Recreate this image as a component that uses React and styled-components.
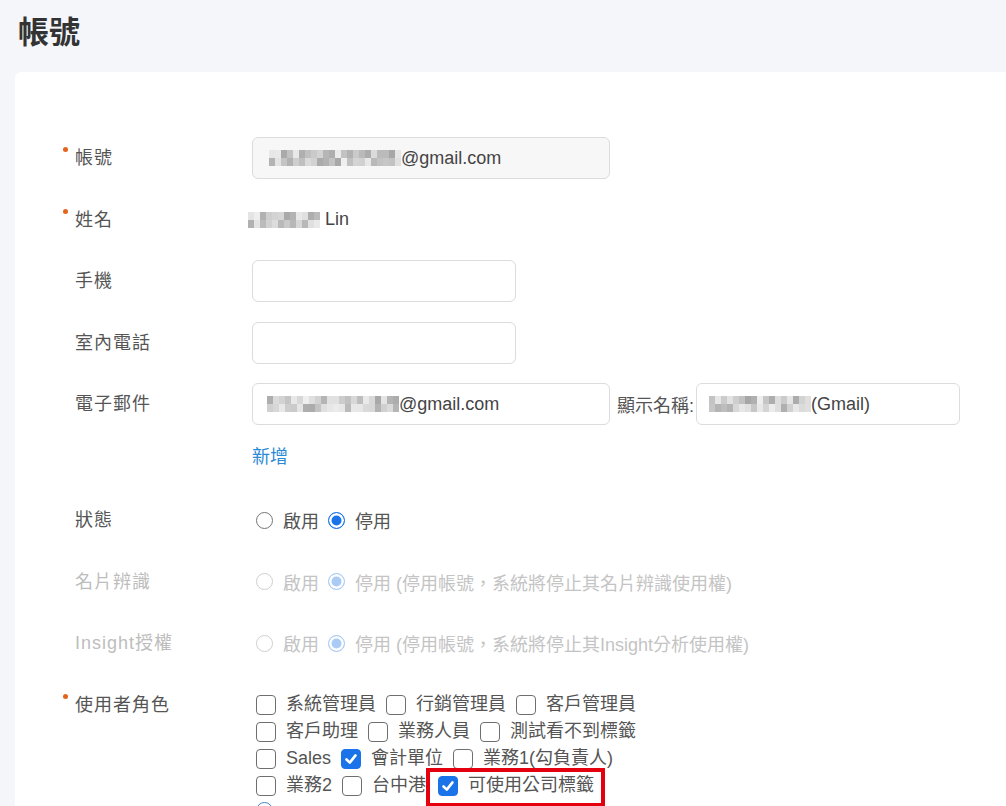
import React from "react";
import styled, { createGlobalStyle } from "styled-components";

const GlobalStyle = createGlobalStyle`
  html, body {
    margin: 0;
    padding: 0;
    background: #f5f6fa;
  }
  body {
    font-family: "Liberation Sans", "Noto Sans CJK TC", sans-serif;
    color: #444;
    overflow: hidden;
  }
`;

const roles = [
  { name: "系統管理員" },
  { name: "行銷管理員" },
  { name: "客戶管理員" },
  { name: "客戶助理" },
  { name: "業務人員" },
  { name: "測試看不到標籤" },
  { name: "Sales" },
  { name: "會計單位", checked: true },
  { name: "業務1(勾負責人)" },
  { name: "業務2" },
  { name: "台中港" },
  { name: "可使用公司標籤", checked: true, highlight: true },
];

// pixelated blur over hidden personal data
const Mosaic = ({ width, seed, offset = 0 }) => {
  const cols = Math.round(width / 6);
  const cells = [];
  let s = seed;
  for (let i = 0; i < cols * 2; i++) {
    s = (s * 9301 + 49297) % 233280;
    const g = 165 + Math.floor((s / 233280) * 75);
    cells.push(`rgb(${g},${g},${g})`);
  }
  return (
    <MosaicBox $cols={cols} $offset={offset}>
      {cells.map((c, i) => (
        <MosaicCell key={i} style={{ background: c }} />
      ))}
    </MosaicBox>
  );
};

const Check = () => (
  <svg width="14" height="14" viewBox="0 0 14 14">
    <polyline
      points="2.5,7.5 5.8,10.6 11.5,3.4"
      fill="none"
      stroke="#fff"
      strokeWidth="2.6"
      strokeLinecap="round"
      strokeLinejoin="round"
    />
  </svg>
);

const App = () => {
  return (
    <>
      <GlobalStyle />
      <Page>
        <Title>帳號</Title>
        <Card>
          <FormRow>
            <Label $required>帳號</Label>
            <Input $width={358} $disabled>
              <Mosaic width={130} seed={17} offset={1} />
              @gmail.com
            </Input>
          </FormRow>

          <FormRow $gap={19.5}>
            <Label $required>姓名</Label>
            <PlainValue>
              <Mosaic width={70} seed={41} offset={-4} />
              &nbsp;Lin
            </PlainValue>
          </FormRow>

          <FormRow $gap={19.5}>
            <Label>手機</Label>
            <Input $width={264} />
          </FormRow>

          <FormRow $gap={19.5}>
            <Label>室內電話</Label>
            <Input $width={264} />
          </FormRow>

          <FormRow $gap={19.5}>
            <Label>電子郵件</Label>
            <InlineControls>
              <Input $width={358}>
                <Mosaic width={132} seed={73} offset={-1} />
                @gmail.com
              </Input>
              <SideLabel>顯示名稱:</SideLabel>
              <Input $width={264}>
                <Mosaic width={100} seed={5} offset={-3} />
                (Gmail)
              </Input>
            </InlineControls>
          </FormRow>

          <FormRow $gap={11}>
            <span />
            <AddLink href="#">新增</AddLink>
          </FormRow>

          <FormRow $gap={21}>
            <Label>狀態</Label>
            <RadioGroup>
              <RadioItem>
                <Radio />
                啟用
              </RadioItem>
              <RadioItem>
                <Radio $checked />
                停用
              </RadioItem>
            </RadioGroup>
          </FormRow>

          <FormRow $gap={19.5}>
            <Label $disabled>名片辨識</Label>
            <RadioGroup $disabled>
              <RadioItem>
                <Radio $disabled />
                啟用
              </RadioItem>
              <RadioItem>
                <Radio $checked $disabled />
                停用 (停用帳號，系統將停止其名片辨識使用權)
              </RadioItem>
            </RadioGroup>
          </FormRow>

          <FormRow $gap={19.5}>
            <Label $disabled>Insight授權</Label>
            <RadioGroup $disabled>
              <RadioItem>
                <Radio $disabled />
                啟用
              </RadioItem>
              <RadioItem>
                <Radio $checked $disabled />
                停用 (停用帳號，系統將停止其Insight分析使用權)
              </RadioItem>
            </RadioGroup>
          </FormRow>

          <FormRow $gap={19.5} $top>
            <Label $required>使用者角色</Label>
            <CheckGroup>
              {roles.map((r) => (
                <CheckItem key={r.name} $highlight={r.highlight}>
                  <Box $checked={r.checked}>{r.checked && <Check />}</Box>
                  {r.name}
                </CheckItem>
              ))}
            </CheckGroup>
          </FormRow>

          <FormRow $gap={3} $top $compact>
            <span />
            <RadioGroup>
              <Radio $dark />
            </RadioGroup>
          </FormRow>
        </Card>
      </Page>
    </>
  );
};

const Page = styled.div`
  height: 806px;
  overflow: hidden;
  padding-left: 15px;
`;

const Title = styled.h1`
  margin: 0;
  padding: 17px 0 0 3px;
  font-size: 31px;
  line-height: 32px;
  font-weight: 600;
  color: #333;
`;

const Card = styled.div`
  margin-top: 23px;
  background: #fff;
  border-radius: 6px 0 0 0;
  padding: 65px 0 40px 47px;
  min-height: 800px;
`;

const FormRow = styled.div`
  display: grid;
  grid-template-columns: 190px auto;
  align-items: ${({ $top }) => ($top ? "start" : "center")};
  min-height: ${({ $compact }) => ($compact ? "0" : "42px")};
  margin-top: ${({ $gap }) => ($gap ? `${$gap}px` : "0")};
`;

const Label = styled.div`
  position: relative;
  padding-left: 13px;
  font-size: 18px;
  line-height: 42px;
  letter-spacing: 1px;
  color: ${({ $disabled }) => ($disabled ? "#bdbdbd" : "#555")};

  &::before {
    content: "";
    display: ${({ $required }) => ($required ? "block" : "none")};
    position: absolute;
    left: 1px;
    top: 10px;
    width: 5px;
    height: 5px;
    border-radius: 50%;
    background: #e4641c;
  }
`;

const Input = styled.div`
  box-sizing: border-box;
  width: ${({ $width }) => $width}px;
  height: 42px;
  display: flex;
  align-items: center;
  padding: 0 15px;
  border: 1px solid #dcdcdc;
  border-radius: 6px;
  background: ${({ $disabled }) => ($disabled ? "#f7f7f7" : "#fff")};
  font-size: 18px;
  color: #444;
`;

const PlainValue = styled.div`
  display: flex;
  align-items: center;
  font-size: 18px;
  color: #444;
`;

const MosaicBox = styled.span`
  display: inline-grid;
  grid-template-columns: repeat(${({ $cols }) => $cols}, 6px);
  grid-auto-rows: 8px;
  margin-left: ${({ $offset }) => $offset}px;
`;

const MosaicCell = styled.span`
  display: block;
`;

const InlineControls = styled.div`
  display: flex;
  align-items: center;
`;

const SideLabel = styled.span`
  margin: 0 2px 0 7px;
  font-size: 18px;
  color: #555;
  white-space: nowrap;
`;

const AddLink = styled.a`
  font-size: 18px;
  color: #2b8ad6;
  text-decoration: none;
  line-height: 42px;
`;

const RadioGroup = styled.div`
  display: flex;
  align-items: center;
  gap: 9px;
  padding-left: 4px;
  font-size: 18px;
  color: ${({ $disabled }) => ($disabled ? "#c4c4c4" : "#555")};
`;

const RadioItem = styled.label`
  display: inline-flex;
  align-items: center;
  gap: 10px;
  white-space: nowrap;
`;

const Radio = styled.span`
  box-sizing: border-box;
  width: 17px;
  height: 17px;
  border-radius: 50%;
  border: 1.5px solid
    ${({ $checked, $disabled, $dark }) =>
      $dark
        ? "#4a86c5"
        : $checked
        ? $disabled
          ? "#a9cbf5"
          : "#1a73e8"
        : $disabled
        ? "#cfcfcf"
        : "#757575"};
  background: ${({ $checked, $disabled }) =>
    $checked ? ($disabled ? "#a9cbf5" : "#1a73e8") : "#fff"};
  box-shadow: ${({ $checked }) => ($checked ? "inset 0 0 0 2.5px #fff" : "none")};
`;

const CheckGroup = styled.div`
  display: flex;
  flex-wrap: wrap;
  max-width: 400px;
  padding: 7.5px 0 0 4px;
  font-size: 18px;
  line-height: 27px;
  color: #555;
`;

const CheckItem = styled.label`
  position: relative;
  display: inline-flex;
  align-items: center;
  margin-right: 10px;
  white-space: nowrap;
  padding-left: ${({ $highlight }) => ($highlight ? "2px" : "0")};

  &::after {
    content: "";
    display: ${({ $highlight }) => ($highlight ? "block" : "none")};
    position: absolute;
    left: -10px;
    right: -11px;
    top: -4px;
    bottom: -8px;
    border: 4px solid #e5000f;
  }
`;

const Box = styled.span`
  box-sizing: border-box;
  width: 20px;
  height: 20px;
  margin-right: 10px;
  border-radius: 4px;
  display: inline-flex;
  align-items: center;
  justify-content: center;
  border: 1.5px solid ${({ $checked }) => ($checked ? "#1a73e8" : "#6f6f6f")};
  background: ${({ $checked }) => ($checked ? "#1a73e8" : "#fff")};
`;

export default App;
